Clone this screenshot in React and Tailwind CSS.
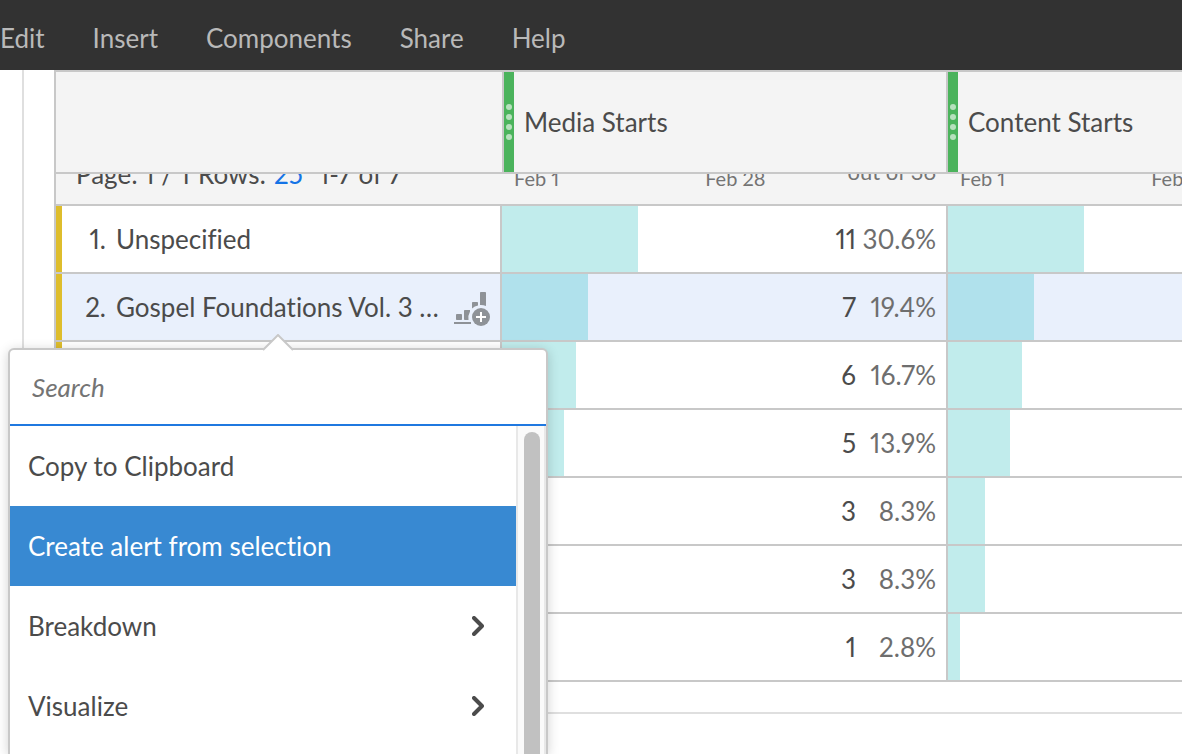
const menus = ['Edit', 'Insert', 'Components', 'Share', 'Help'];
const metrics = ['Media Starts', 'Content Starts'];
const rows = [
  { name: 'Unspecified', count: 11, percent: 30.6 },
  { name: 'Gospel Foundations Vol. 3 …', count: 7, percent: 19.4, selected: true },
  { count: 6, percent: 16.7 },
  { count: 5, percent: 13.9 },
  { count: 3, percent: 8.3 },
  { count: 3, percent: 8.3 },
  { count: 1, percent: 2.8 },
];
const actions = [
  { label: 'Copy to Clipboard' },
  { label: 'Create alert from selection', active: true },
  { label: 'Breakdown', submenu: true },
  { label: 'Visualize', submenu: true },
];

function VisualizeIcon() {
  return (
    <svg width="36" height="42" viewBox="0 -6 36 42" fill="#8e9297" aria-hidden="true">
      <rect x="0" y="30" width="17" height="2" />
      <rect x="2" y="22" width="6" height="6" rx="0.8" />
      <path d="M10.8 18H16v1.5a13 13 0 0 0-1.500 8.500h-3.700a.8.8 0 0 1-.8-.8v-8.400a.8.8 0 0 1 .8-.8Z" />
      <path d="M18.800 10h4.400a.8.8 0 0 1 .8.8v2.700a13 13 0 0 0-6 3v-5.700a.8.8 0 0 1 .8-.8Z" />
      <path d="M26.800 0h4.400a.8.8 0 0 1 .8.8v13.200a13 13 0 0 0-6-1V.8a.8.8 0 0 1 .8-.8Z" />
      <circle cx="27" cy="25" r="9" />
      <path d="M27 20v10M22 25h10" stroke="#fff" strokeWidth="2" />
    </svg>
  );
}

function Chevron() {
  return (
    <svg width="12" height="20" viewBox="0 0 12 20" fill="none" stroke="#4b4b4b" strokeWidth="4" strokeLinecap="round" strokeLinejoin="round" aria-hidden="true">
      <path d="M2 2l8 8-8 8" />
    </svg>
  );
}

function MenuBar() {
  return (
    <nav className="flex h-[70px] shrink-0 items-center gap-12 bg-[#323232] pt-1.5 text-[26px] leading-8 text-[#b9b9b9]">
      {menus.map((m) => (
        <button key={m} type="button">{m}</button>
      ))}
    </nav>
  );
}

function MetricHeader({ title, first }) {
  return (
    <th scope="col" className={`border-y-2 border-r-2 border-[#c8c8c8] p-0 font-normal ${first ? 'border-l-2' : ''}`}>
      <div className="flex h-[100px] items-center gap-2.5">
        <span className="flex h-full w-2.5 flex-col items-center justify-center gap-1 bg-[#4bb35c]">
          {[0, 1, 2, 3].map((i) => (
            <span key={i} className="size-1.5 rounded-full bg-[#b7e1be]" />
          ))}
        </span>
        <span>{title}</span>
      </div>
    </th>
  );
}

function MetricCell({ row }) {
  return (
    <td className="border-r-2 border-b-2 border-[#c8c8c8] p-0">
      <div className="relative flex h-[66px] items-center justify-end pr-2.5">
        <span
          className={`absolute inset-y-0 left-0 ${row.selected ? 'bg-[#b0e1ec]' : 'bg-[#c1ecec]'}`}
          style={{ width: `${row.percent}%` }}
        />
        <span className="relative">{row.count}</span>
        <span className="relative w-20 text-right text-[#6e6e6e]">{row.percent}%</span>
      </div>
    </td>
  );
}

function ReportTable() {
  return (
    <table className="w-full min-w-[1338px] table-fixed border-separate border-spacing-0 text-left text-[26px] leading-8 [font-variant-numeric:proportional-nums]">
      <thead className="bg-[#f4f4f4]">
        <tr>
          <td className="border-y-2 border-[#c8c8c8] p-0" />
          {metrics.map((m, i) => (
            <MetricHeader key={m} title={m} first={i === 0} />
          ))}
        </tr>
        <tr>
          <td className="border-b-2 border-[#c8c8c8] p-0">
            <div className="flex h-[30px] items-end overflow-hidden pb-3.5 pl-5 whitespace-nowrap">
              <span>Page: 1 / 1</span>
              <span className="ml-2">Rows:</span>
              <button type="button" className="ml-2 text-[#1473e6]">25</button>
              <span className="ml-4">1-7 of 7</span>
            </div>
          </td>
          {metrics.map((m) => (
            <td key={m} className="border-b-2 border-[#c8c8c8] p-0">
              <div className="flex h-[30px] items-end justify-between overflow-hidden pr-3 pb-3.5 pl-3 text-[20px] leading-6 text-[#747474]">
                <span>Feb 1</span>
                <span className="ml-16">Feb 28</span>
                <span className="pb-1.5 text-[22px]">out of 36</span>
              </div>
            </td>
          ))}
        </tr>
      </thead>
      <tbody>
        {rows.map((row, i) => (
          <tr key={i} className={row.selected ? 'bg-[#e9f0fc]' : 'bg-white'}>
            <th scope="row" className="border-r-2 border-b-2 border-[#c8c8c8] p-0 font-normal">
              <div className="flex h-[66px] items-center border-l-6 border-[#debd2c] pr-2.5">
                {row.name && (
                  <>
                    <span className="w-11 shrink-0 text-right">{i + 1}.</span>
                    <span className="ml-2.5 flex-1 whitespace-nowrap">{row.name}</span>
                  </>
                )}
                {row.selected && (
                  <button type="button" aria-label="Visualize row">
                    <VisualizeIcon />
                  </button>
                )}
              </div>
            </th>
            {metrics.map((m) => (
              <MetricCell key={m} row={row} />
            ))}
          </tr>
        ))}
      </tbody>
    </table>
  );
}

function ContextMenu() {
  return (
    <div className="absolute top-[348px] bottom-0 left-2 flex w-[540px] flex-col rounded-t-md border-x-2 border-t-2 border-[#c8c8c8] bg-white shadow-[0_2px_12px_rgba(0,0,0,0.18)]">
      <svg className="absolute -top-4 left-[252px]" width="32" height="17" viewBox="0 0 32 17" aria-hidden="true">
        <path d="M0 17L16 1l16 16Z" fill="#fff" />
        <path d="M1 16L16 1l15 15" fill="none" stroke="#c8c8c8" strokeWidth="2" />
      </svg>
      <input
        type="text"
        aria-label="Search"
        placeholder="Search"
        className="h-[76px] shrink-0 rounded-t-md border-b-2 border-[#1f78e0] bg-white px-[22px] text-[26px] leading-8 outline-none placeholder:text-[#747474] placeholder:italic"
      />
      <div className="flex min-h-0 flex-1 overflow-hidden">
        <ul className="flex-1">
          {actions.map((a) => (
            <li key={a.label}>
              <button
                type="button"
                className={`flex h-20 w-full items-center justify-between pr-8 pl-[18px] text-[26px] leading-8 ${a.active ? 'bg-[#3889d2] text-white' : ''}`}
              >
                <span>{a.label}</span>
                {a.submenu && <Chevron />}
              </button>
            </li>
          ))}
        </ul>
        <div className="flex w-[30px] border-x-2 border-[#e8e8e8] bg-[#fafafa] pt-1.5 pl-1.5">
          <div className="w-4 rounded-t-full bg-[#c1c1c1]" />
        </div>
      </div>
    </div>
  );
}

export default function App() {
  return (
    <div className="relative flex h-screen flex-col overflow-hidden bg-white font-['Lato',sans-serif] text-[#4b4b4b] [font-variant-ligatures:no-common-ligatures]">
      <MenuBar />
      <main className="ml-[22px] border-b-2 border-l-2 border-[#dfdfdf] pb-[30px] pl-[30px]">
        <div className="overflow-hidden border-l-2 border-[#c8c8c8]">
          <ReportTable />
        </div>
      </main>
      <ContextMenu />
    </div>
  );
}
